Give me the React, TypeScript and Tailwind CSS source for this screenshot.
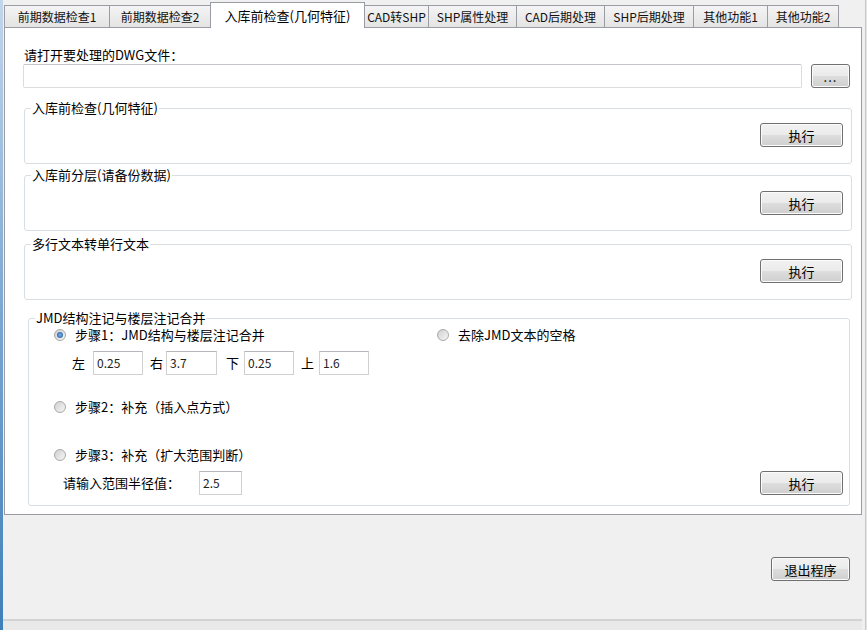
import { clsx } from 'clsx'
import type { ReactNode } from 'react'

const tabs = [
  { label: '前期数据检查1', w: 'w-[106px]' },
  { label: '前期数据检查2', w: 'w-[102px]' },
  { label: '入库前检查(几何特征)', w: 'w-[155px]', active: true },
  { label: 'CAD转SHP', w: 'w-[65px]' },
  { label: 'SHP属性处理', w: 'w-[89px]' },
  { label: 'CAD后期处理', w: 'w-[89px]' },
  { label: 'SHP后期处理', w: 'w-[90px]' },
  { label: '其他功能1', w: 'w-[75px]' },
  { label: '其他功能2', w: 'w-[72px]' },
]

function WinButton({ children, className }: { children: ReactNode; className?: string }) {
  return (
    <button
      className={clsx(
        'h-[24px] rounded-[3px] border border-[#707070] bg-[linear-gradient(#f2f2f2_0%,#ebebeb_48%,#dddddd_52%,#cfcfcf_100%)] shadow-[inset_0_0_0_1px_#fbfbfb] text-[13px] leading-none text-black',
        className
      )}
    >
      {children}
    </button>
  )
}

function Group({ title, className, children }: { title: string; className?: string; children: ReactNode }) {
  return (
    <fieldset className={clsx('rounded-[3px] border border-[#d9dee2]', className)}>
      <legend className="ml-[6px] px-[1px] text-[13px] leading-[16px] text-black">{title}</legend>
      {children}
    </fieldset>
  )
}

function Radio({ checked, label }: { checked?: boolean; label: string }) {
  return (
    <div className="flex items-center">
      <span className="flex h-[12px] w-[12px] items-center justify-center rounded-full border border-[#a9a9a9] bg-linear-to-br from-[#cfcfcf] to-[#f7f7f7]">
        {checked && <span className="h-[6px] w-[6px] rounded-full bg-[radial-gradient(circle,#7fb2e6_0%,#1f5aa0_90%)]" />}
      </span>
      <span className="ml-[9px] text-[13px] leading-[16px] text-black">{label}</span>
    </div>
  )
}

function SmallInput({ value, className }: { value: string; className?: string }) {
  return (
    <div
      className={clsx(
        'flex h-[24px] items-center border border-[#d0d0d0] border-t-[#b5b7bd] bg-white pl-[3px] text-[12px] text-[#222]',
        className
      )}
    >
      {value}
    </div>
  )
}

function ExecGroup({ title, className, pt }: { title: string; className?: string; pt: string }) {
  return (
    <Group title={title} className={clsx('ml-[19px] mr-[9px]', className)}>
      <div className={clsx('flex justify-end pr-[8px]', pt)}>
        <WinButton className="w-[83px]">执行</WinButton>
      </div>
    </Group>
  )
}

export default function App() {
  return (
    <div className="flex h-[630px] w-[867px] overflow-hidden bg-[#f0f0f0] font-['Noto_Sans_CJK_SC','Noto_Sans',sans-serif] text-black">
      {/* window frame, left */}
      <div className="w-[3px] bg-linear-to-b from-[#c3d6ea] via-[#7aa7d2] to-[#3f7fb8]" />

      <div className="flex w-[859px] flex-col">
        {/* tab strip */}
        <div className="ml-[1px] mt-[2px] flex h-[25px] items-end">
          {tabs.map((t, i) =>
            t.active ? (
              <div
                key={t.label}
                className={clsx(
                  'relative z-10 -mb-px flex h-[26px] shrink-0 items-center justify-center border border-b-0 border-[#9a9ca3] bg-white text-[13px] leading-none',
                  t.w,
                  i > 0 && '-ml-px'
                )}
              >
                {t.label}
              </div>
            ) : (
              <div
                key={t.label}
                className={clsx(
                  'flex h-[22px] shrink-0 items-center justify-center whitespace-nowrap border border-b-0 border-[#9a9ca3] bg-linear-to-b from-[#f4f4f4] to-[#e4e4e4] text-[12px] leading-none text-[#111]',
                  t.w,
                  i > 0 && '-ml-px'
                )}
              >
                {t.label}
              </div>
            )
          )}
        </div>

        {/* tab page */}
        <div className="ml-[1px] flex h-[488px] w-[858px] flex-col border border-[#9a9ca3] bg-white">
          <div className="ml-[19px] mt-[19px] text-[13px] leading-[16px]">请打开要处理的DWG文件：</div>
          <div className="ml-[18px] mr-[11px] mt-[1px] flex gap-[9px]">
            <div className="h-[24px] flex-1 rounded-[2px] border border-[#dcdcdc] border-t-[#c4c6cc] bg-white" />
            <WinButton className="w-[39px] text-[10px] tracking-[1px] text-[#888]">...</WinButton>
          </div>

          <ExecGroup title="入库前检查(几何特征)" className="mt-[12px] pb-[16px]" pt="pt-[7px]" />
          <ExecGroup title="入库前分层(请备份数据)" className="mt-[3px] pb-[15px]" pt="pt-[8px]" />
          <ExecGroup title="多行文本转单行文本" className="mt-[5px] pb-[16px]" pt="pt-[7px]" />

          <Group title="JMD结构注记与楼层注记合并" className="ml-[23px] mr-[11px] mt-[10px] pb-[10px]">
            <div className="mt-[1px] flex pl-[25px]">
              <div className="w-[383px]">
                <Radio checked label="步骤1：JMD结构与楼层注记合并" />
              </div>
              <Radio label="去除JMD文本的空格" />
            </div>

            <div className="mt-[8px] flex items-center pl-[43px] text-[13px] leading-[16px]">
              <span>左</span>
              <SmallInput value="0.25" className="ml-[8px] w-[50px]" />
              <span className="ml-[7px]">右</span>
              <SmallInput value="3.7" className="ml-[3px] w-[51px]" />
              <span className="ml-[9px]">下</span>
              <SmallInput value="0.25" className="ml-[5px] w-[50px]" />
              <span className="ml-[7px]">上</span>
              <SmallInput value="1.6" className="ml-[5px] w-[50px]" />
            </div>

            <div className="mt-[24px] pl-[25px]">
              <Radio label="步骤2：补充（插入点方式）" />
            </div>
            <div className="mt-[32px] pl-[25px]">
              <Radio label="步骤3：补充（扩大范围判断）" />
            </div>

            <div className="mt-[8px] flex items-center pl-[34px] pr-[6px]">
              <span className="w-[136px] text-[13px] leading-[16px]">请输入范围半径值：</span>
              <SmallInput value="2.5" className="h-[23px] w-[43px]" />
              <WinButton className="ml-auto w-[83px]">执行</WinButton>
            </div>
          </Group>
        </div>

        {/* footer */}
        <div className="flex h-[104px] items-start justify-end pr-[12px] pt-[42px]">
          <WinButton className="w-[79px]">退出程序</WinButton>
        </div>
        <div className="flex-1 border-t-2 border-[#d3d3d3] bg-[#e9e9e9]" />
      </div>

      {/* window frame, right */}
      <div className="flex w-[5px] justify-end">
        <div className="w-[2px] border-l border-[#c8c8c8] bg-[#e4e4e4]" />
      </div>
    </div>
  )
}
